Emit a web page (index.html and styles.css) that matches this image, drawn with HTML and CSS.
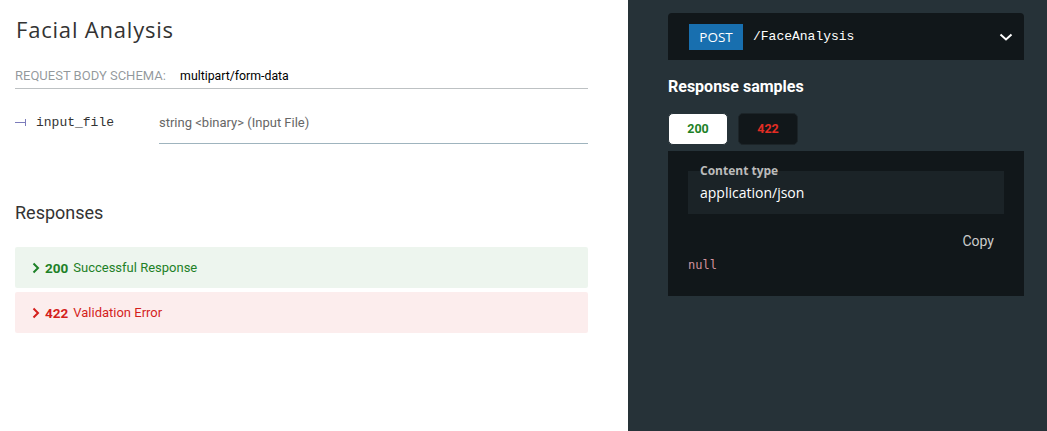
FILE: index.html
```html
<!DOCTYPE html>
<html>
<head>
<meta charset="utf-8">
<link rel="stylesheet" href="styles.css">
</head>
<body>
<div class="page">
  <main class="middle">
    <h2 class="op-title">Facial Analysis</h2>
    <h5 class="schema-head">Request Body schema: <span class="media">multipart/form-data</span></h5>
    <div class="prop-row">
      <div class="prop-name">
        <span class="tree"><span class="tree-h"></span><span class="tree-v"></span></span>
        <span class="prop-label">input_file</span>
      </div>
      <div class="prop-desc">string &lt;binary&gt; (Input File)</div>
    </div>
    <h3 class="responses-title">Responses</h3>
    <div class="resp resp-ok">
      <svg class="chev" viewBox="0 0 8 12" width="8" height="12"><path d="M1.5 1.5 L6 6 L1.5 10.5" fill="none" stroke="currentColor" stroke-width="2"/></svg>
      <strong class="code">200</strong><span class="resp-text">Successful Response</span>
    </div>
    <div class="resp resp-err">
      <svg class="chev" viewBox="0 0 8 12" width="8" height="12"><path d="M1.5 1.5 L6 6 L1.5 10.5" fill="none" stroke="currentColor" stroke-width="2"/></svg>
      <strong class="code">422</strong><span class="resp-text">Validation Error</span>
    </div>
  </main>
  <aside class="right">
    <div class="endpoint">
      <span class="method">POST</span>
      <span class="path">/FaceAnalysis</span>
      <svg class="ep-chev" viewBox="0 0 14 8" width="14" height="8"><path d="M1.5 1.5 L7 6.5 L12.5 1.5" fill="none" stroke="#fff" stroke-width="2"/></svg>
    </div>
    <h3 class="samples-title">Response samples</h3>
    <div class="tabs">
      <span class="tab tab-active">200</span>
      <span class="tab tab-err">422</span>
    </div>
    <div class="sample-panel">
      <div class="ctype">
        <span class="ctype-label">Content type</span>
        <span class="ctype-value">application/json</span>
      </div>
      <div class="copy-row"><span class="copy">Copy</span></div>
      <pre class="code-block"><span class="tok-null">null</span></pre>
    </div>
  </aside>
</div>
</body>
</html>
```
FILE: styles.css
```css
html, body {
  margin: 0;
  padding: 0;
}
body {
  width: 1047px;
  height: 431px;
  overflow: hidden;
  font-family: Roboto, "Liberation Sans", sans-serif;
  color: #333;
}
.page {
  display: flex;
  height: 431px;
}
.middle {
  width: 628px;
  box-sizing: border-box;
  padding: 14px 40px 0 15px;
  background: #fff;
}
.op-title {
  margin: 0;
  font-family: "Open Sans", sans-serif;
  font-weight: 400;
  font-size: 22px;
  letter-spacing: 0.8px;
  line-height: 30px;
  color: #333;
  padding-left: 1px;
}
.schema-head {
  margin: 22px 0 0;
  font-weight: 400;
  font-size: 13px;
  line-height: 20px;
  padding-bottom: 2px;
  text-transform: uppercase;
  color: rgba(38, 50, 56, 0.5);
  border-bottom: 1px solid rgba(38, 50, 56, 0.3);
}
.schema-head .media {
  text-transform: none;
  color: #000;
  font-size: 12.3px;
  margin-left: 11px;
}
.prop-row {
  display: flex;
  margin-top: 14px;
}
.prop-name {
  width: 144px;
  display: flex;
  align-items: center;
  padding-bottom: 2px;
}
.tree {
  display: flex;
  align-items: center;
  width: 21px;
}
.tree-h {
  width: 10px;
  height: 1px;
  background: #7c7cbb;
}
.tree-v {
  width: 1px;
  height: 7px;
  background: #7c7cbb;
}
.prop-label {
  font-family: "Liberation Mono", monospace;
  font-size: 13px;
  color: #333;
}
.prop-desc {
  flex: 1;
  padding: 10px 0;
  font-size: 13px;
  line-height: 20px;
  color: #666;
  border-bottom: 1px solid #9fb4be;
}
.responses-title {
  margin: 58px 0 0;
  font-weight: 400;
  font-size: 18px;
  line-height: 22px;
  color: #333;
}
.resp {
  display: flex;
  align-items: center;
  height: 41px;
  box-sizing: border-box;
  padding: 0 17px;
  border-radius: 2px;
  font-size: 13px;
  margin-bottom: 4px;
}
.resp-ok {
  margin-top: 23px;
  background: rgba(29, 129, 39, 0.08);
  color: #1d8127;
}
.resp-err {
  background: rgba(212, 31, 28, 0.08);
  color: #d41f1c;
}
.chev {
  margin-right: 5px;
  margin-top: 1px;
}
.code {
  font-weight: 700;
  font-size: 13.5px;
  margin-right: 5px;
}
.right {
  flex: 1;
  background: #263238;
  padding: 13px 23px 0 40px;
}
.endpoint {
  display: flex;
  align-items: center;
  height: 47px;
  box-sizing: border-box;
  padding: 0 11px 0 21px;
  background: #11171a;
  border-radius: 4px 4px 0 0;
}
.method {
  width: 54px;
  height: 26px;
  background: #186faf;
  color: #fff;
  font-family: "Open Sans", sans-serif;
  font-size: 13.5px;
  line-height: 26px;
  text-align: center;
  margin-right: 10px;
}
.path {
  flex: 1;
  color: #fff;
  font-family: "Liberation Mono", monospace;
  font-size: 13px;
}
.samples-title {
  margin: 16px 0 0;
  color: #fff;
  font-size: 16px;
  font-weight: 700;
  line-height: 22px;
}
.tabs {
  display: flex;
  gap: 10px;
  margin-top: 15px;
}
.tab {
  width: 60px;
  height: 32px;
  box-sizing: border-box;
  border-radius: 5px;
  font-size: 12.5px;
  font-weight: 700;
  line-height: 30px;
  text-align: center;
  border: 1px solid #11171a;
}
.tab-active {
  background: #fff;
  color: #1d8127;
  border-color: #263238;
}
.tab-err {
  background: #11171a;
  color: #e22d24;
  border-color: #1c2428;
}
.sample-panel {
  margin-top: 6px;
  background: #11171a;
  padding: 20px 20px 22px;
}
.ctype {
  position: relative;
  height: 43px;
  background: #1b2327;
  padding: 0 12px;
  display: flex;
  align-items: center;
}
.ctype-label {
  position: absolute;
  left: 12px;
  top: -7px;
  font-family: "Open Sans", sans-serif;
  font-weight: 700;
  font-size: 12px;
  line-height: 14px;
  color: #bbb;
}
.ctype-value {
  color: #fff;
  font-family: "Open Sans", sans-serif;
  font-size: 14px;
}
.copy-row {
  display: flex;
  justify-content: flex-end;
  margin-top: 17px;
  padding-right: 10px;
}
.copy {
  color: #ccc;
  font-size: 14px;
  line-height: 20px;
}
.code-block {
  margin: 5px 0 0;
  font-family: "DejaVu Sans Mono", monospace;
  font-size: 12px;
  line-height: 18px;
}
.tok-null {
  color: #d0939e;
}
```
